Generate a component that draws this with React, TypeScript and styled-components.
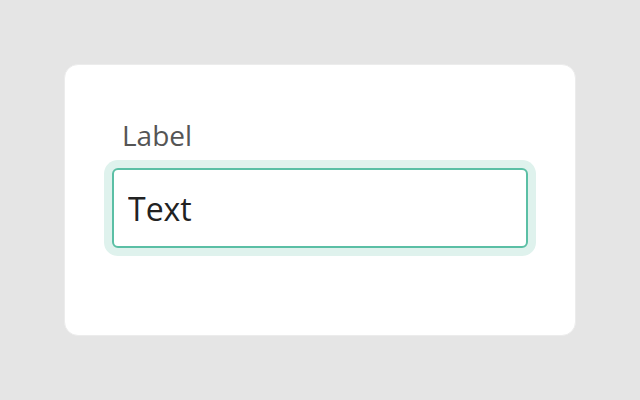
import * as React from "react";
import styled, { createGlobalStyle } from "styled-components";

export default () => {
  const [value, setValue] = React.useState("Text");
  return (
    <>
      <GlobalStyle />
      <Page>
        <Card>
          <Field>
            <Label htmlFor="field">Label</Label>
            <Input
              id="field"
              value={value}
              onChange={(e) => setValue(e.target.value)}
              $focused
            />
          </Field>
        </Card>
      </Page>
    </>
  );
};

const GlobalStyle = createGlobalStyle`
  html, body {
    margin: 0;
    padding: 0;
    background: #e5e5e5;
    font-family: "Open Sans", "Noto Sans", sans-serif;
  }
  * {
    box-sizing: border-box;
  }
`;

const Page = styled.div`
  display: flex;
  align-items: center;
  justify-content: center;
  width: 640px;
  height: 400px;
`;

const Card = styled.div`
  width: 512px;
  min-height: 272px;
  padding: 48px;
  background: #ffffff;
  border: 1px solid #ececec;
  border-radius: 14px;
`;

const Field = styled.div`
  display: flex;
  flex-direction: column;
  gap: 10px;
  margin: -1px;
`;

const Label = styled.label`
  padding: 4px 10px 4px;
  font-size: 28px;
  line-height: 38px;
  color: #555555;
`;

const Input = styled.input<{ $focused?: boolean }>`
  width: 416px;
  height: 80px;
  padding: 0 14px;
  font-family: inherit;
  font-size: 32px;
  color: #222222;
  background: #ffffff;
  border: 2px solid ${(p) => (p.$focused ? "#5bbfa5" : "#cccccc")};
  border-radius: 6px;
  outline: none;
  box-shadow: ${(p) => (p.$focused ? "0 0 0 8px #dff2ed" : "none")};
`;
